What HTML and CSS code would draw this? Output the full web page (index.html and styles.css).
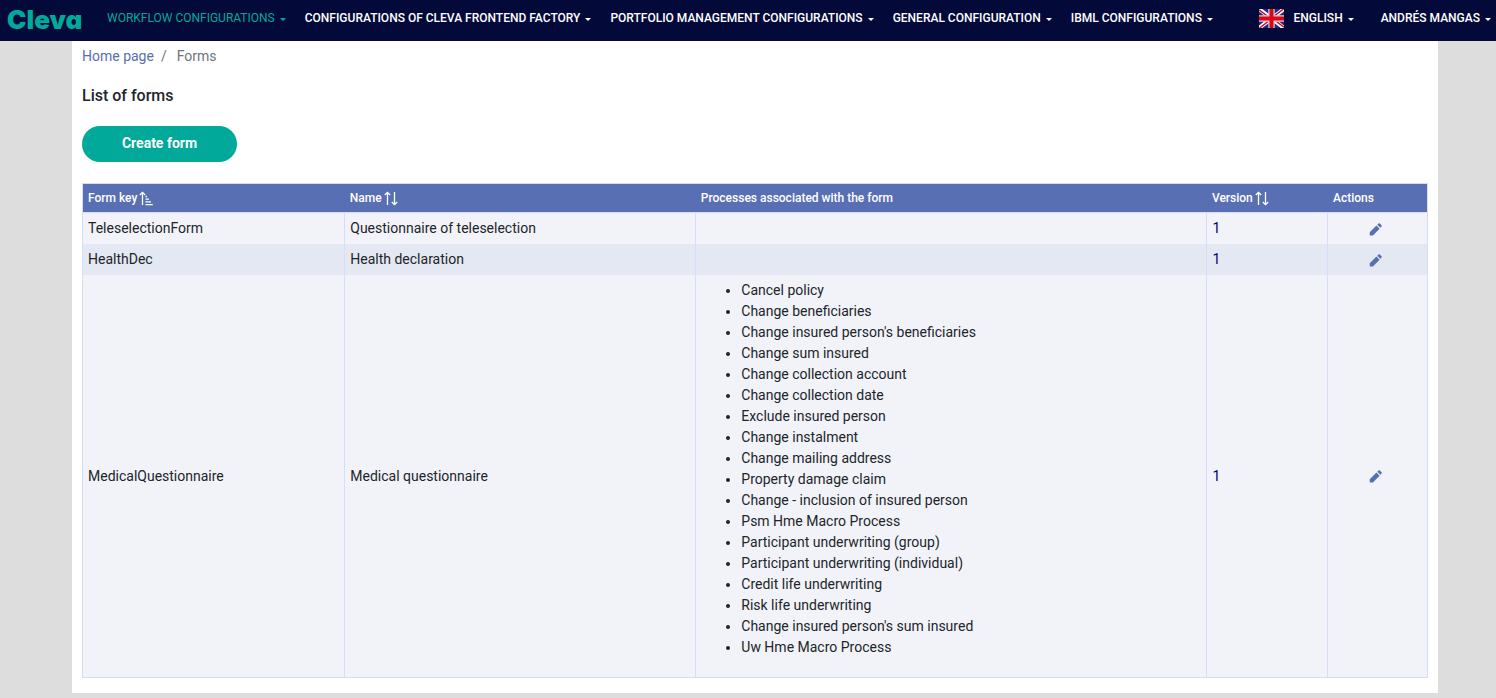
FILE: index.html
```html
<!DOCTYPE html>
<html lang="en">
<head>
<meta charset="utf-8">
<title>Cleva - List of forms</title>
<link rel="stylesheet" href="styles.css">
</head>
<body>
<svg class="sprite" aria-hidden="true">
  <symbol id="pencil" viewBox="0 0 14 14">
    <path d="M.8 13.4V10L8 2.8 11.4 6.2 4.2 13.4ZM8.9 1.9 10.3.6Q11 0 11.7.6L13.5 2.4Q14.1 3.1 13.5 3.8L12.2 5.2Z"/>
  </symbol>
  <symbol id="sort" viewBox="0 0 14 15">
    <path d="M3.5 14V1.5M.8 4 3.5 1.3 6.2 4M10.5 1V13.5M7.8 11 10.5 13.7 13.2 11" fill="none" stroke="currentColor" stroke-width="1.3"/>
  </symbol>
  <symbol id="sort-up" viewBox="0 0 14 15">
    <path d="M3.5 14V1.5M.8 4 3.5 1.3 6.2 4M6.5 5.5H8M6.5 8.2H10M6.5 10.9H12M6.5 13.6H13.8" fill="none" stroke="currentColor" stroke-width="1.3"/>
  </symbol>
</svg>
<header class="navbar">
  <a class="brand" href="#">Cleva</a>
  <nav class="menu">
    <button class="menu-item active" type="button">WORKFLOW CONFIGURATIONS</button>
    <button class="menu-item" type="button">CONFIGURATIONS OF CLEVA FRONTEND FACTORY</button>
    <button class="menu-item" type="button">PORTFOLIO MANAGEMENT CONFIGURATIONS</button>
    <button class="menu-item" type="button">GENERAL CONFIGURATION</button>
    <button class="menu-item" type="button">IBML CONFIGURATIONS</button>
  </nav>
  <div class="menu user-menu">
    <button class="menu-item" type="button">
      <svg class="flag" viewBox="0 0 25 19" aria-hidden="true">
        <path fill="#1b2a80" d="M0 0h25v19H0z"/>
        <path stroke="#fff" stroke-width="4" d="M0 0 25 19M25 0 0 19"/>
        <path stroke="#d8071c" stroke-width="1.5" d="M0 .8 11 9M25 18.2 14 10M24.5 0 14 8M.5 19 11 11"/>
        <path stroke="#e9c9d2" stroke-width="6.4" d="M12.5 0v19M0 9.5h25"/>
        <path stroke="#d8071c" stroke-width="4" d="M12.5 0v19M0 9.5h25"/>
      </svg>ENGLISH</button>
    <button class="menu-item" type="button">ANDRÉS MANGAS</button>
  </div>
</header>
<main class="page">
  <nav class="breadcrumb" aria-label="Breadcrumb">
    <a href="#">Home page</a><span>/</span><span>Forms</span>
  </nav>
  <h1 class="title">List of forms</h1>
  <button class="create" type="button">Create form</button>
  <table class="forms">
    <colgroup>
      <col class="col-key"><col class="col-name"><col class="col-process"><col class="col-version"><col class="col-actions">
    </colgroup>
    <thead>
      <tr>
        <th scope="col">Form key<svg class="sort"><use href="#sort-up"/></svg></th>
        <th scope="col">Name<svg class="sort"><use href="#sort"/></svg></th>
        <th scope="col">Processes associated with the form</th>
        <th scope="col">Version<svg class="sort"><use href="#sort"/></svg></th>
        <th scope="col">Actions</th>
      </tr>
    </thead>
    <tbody>
      <tr>
        <td>TeleselectionForm</td>
        <td>Questionnaire of teleselection</td>
        <td></td>
        <td class="version">1</td>
        <td class="actions"><button class="edit" type="button" aria-label="Edit TeleselectionForm"><svg><use href="#pencil"/></svg></button></td>
      </tr>
      <tr>
        <td>HealthDec</td>
        <td>Health declaration</td>
        <td></td>
        <td class="version">1</td>
        <td class="actions"><button class="edit" type="button" aria-label="Edit HealthDec"><svg><use href="#pencil"/></svg></button></td>
      </tr>
      <tr>
        <td>MedicalQuestionnaire</td>
        <td>Medical questionnaire</td>
        <td>
          <ul class="processes">
            <li>Cancel policy</li>
            <li>Change beneficiaries</li>
            <li>Change insured person's beneficiaries</li>
            <li>Change sum insured</li>
            <li>Change collection account</li>
            <li>Change collection date</li>
            <li>Exclude insured person</li>
            <li>Change instalment</li>
            <li>Change mailing address</li>
            <li>Property damage claim</li>
            <li>Change - inclusion of insured person</li>
            <li>Psm Hme Macro Process</li>
            <li>Participant underwriting (group)</li>
            <li>Participant underwriting (individual)</li>
            <li>Credit life underwriting</li>
            <li>Risk life underwriting</li>
            <li>Change insured person's sum insured</li>
            <li>Uw Hme Macro Process</li>
          </ul>
        </td>
        <td class="version">1</td>
        <td class="actions"><button class="edit" type="button" aria-label="Edit MedicalQuestionnaire"><svg><use href="#pencil"/></svg></button></td>
      </tr>
    </tbody>
  </table>
</main>
</body>
</html>
```
FILE: styles.css
```css
* { box-sizing: border-box; }
body {
  margin: 0;
  background: #ddd;
  color: #212529;
  font: 14px/21px Roboto, sans-serif;
}
button { font-family: inherit; border: 0; cursor: pointer; }
a { text-decoration: none; }
.sprite { display: none; }

.navbar {
  display: flex;
  align-items: center;
  height: 41px;
  padding: 0 5px 5px 7px;
  background: #030939;
}
.brand {
  width: 90px;
  padding-top: 3px;
  color: #00a99a;
  font: 900 26px/32px Inter, sans-serif;
  font-feature-settings: "cv11";
}
.menu { display: flex; }
.user-menu { margin-left: auto; gap: 8px; }
.menu-item {
  display: flex;
  align-items: center;
  padding: 0 9px 0 10px;
  background: none;
  color: #fff;
  font-size: 12px;
  font-weight: 500;
  line-height: 20px;
  white-space: nowrap;
}
.menu-item::after {
  content: "";
  margin: 3px 0 0 5px;
  border: 3px solid transparent;
  border-top-color: currentColor;
  border-bottom: 0;
}
.user-menu .menu-item:last-child { padding-right: 0; }
.menu-item.active { color: #00a99a; font-weight: 400; }
.flag { width: 25px; height: 19px; margin-right: 10px; }

.page {
  margin: 0 58px 5px 72px;
  padding: 5px 10px 15px;
  background: #fff;
}
.breadcrumb { display: flex; gap: 7px; color: #6c757d; }
.breadcrumb a { color: #596fb3; }
.breadcrumb span:last-child { margin-left: 3px; }
.title {
  margin: 18px 0 20px;
  font-size: 16px;
  font-weight: 500;
  line-height: 21px;
}
.create {
  display: block;
  min-width: 155px;
  height: 36px;
  margin-bottom: 21px;
  padding: 0 0 2px;
  border-radius: 18px;
  background: #00a99a;
  color: #fff;
  font-size: 14px;
  font-weight: 700;
}

.forms {
  width: 100%;
  table-layout: fixed;
  border-collapse: collapse;
  border: 1px solid #d6dcf9;
}
.col-key { width: 19.5%; }
.col-name { width: 26.1%; }
.col-process { width: 38%; }
.col-version { width: 9%; }
.col-actions { width: 7.4%; }
.forms th {
  padding: 4px 5px 3px;
  border-bottom: 1px solid #d6dcf9;
  background: #596fb3;
  color: #fff;
  font-size: 12px;
  font-weight: 500;
  line-height: 21px;
  text-align: left;
}
.sort { width: 14px; height: 15px; margin-left: 2px; vertical-align: -4px; }
.forms td {
  padding: 5px;
  border-right: 1px solid #d6dcf9;
  background: #f2f3f9;
}
.forms tr:nth-child(even) td { background: #e4e8f3; }
.forms .version { color: #00007d; }
.forms .actions { padding-right: 10px; text-align: center; }
.edit { padding: 0; background: none; color: #596fb3; vertical-align: middle; }
.edit svg { display: block; width: 13px; height: 13px; fill: currentColor; }
.processes { margin: 0 0 14px; padding-left: 40px; }
```
